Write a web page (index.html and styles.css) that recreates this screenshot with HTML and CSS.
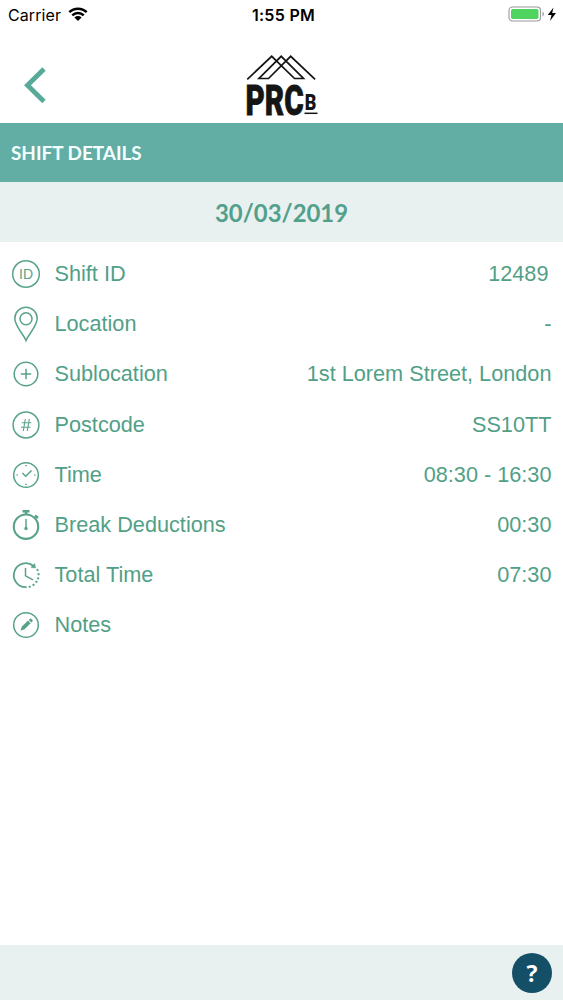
FILE: index.html
```html
<!DOCTYPE html>
<html lang="en">
<head>
    <meta charset="UTF-8">
    <title>Shift Details</title>
    <link rel="stylesheet" href="styles.css">
</head>
<body>
<div class="status">
    <div class="carrier">
        <span>Carrier</span>
        <svg width="20" height="15" viewBox="0 0 20 15">
            <path d="M1.3 5.2a12.4 12.4 0 0 1 17.4 0M4.3 8.3a8.2 8.2 0 0 1 11.4 0" fill="none" stroke="#000" stroke-width="2.5"/>
            <path d="M6.4 10.4a5.2 5.2 0 0 1 7.2 0L10 14z"/>
        </svg>
    </div>
    <div class="clock">1:55 PM</div>
    <div class="power">
        <svg width="48" height="18" viewBox="0 0 48 18">
            <rect x="0" y="2" width="31.500" height="14" rx="3.5" fill="#fff" stroke="#999" stroke-width="1.1"/>
            <rect x="2" y="4" width="27.500" height="10" rx="1.8" fill="#50d460"/>
            <path d="M33.500 6.500v5q3-2.500 0-5z" fill="#999"/>
            <path d="M44.500 2.500L38.800 10h3.700L41 16l6-8h-3.800z"/>
        </svg>
    </div>
</div>
<div class="header">
    <svg class="back" width="24" height="38" viewBox="0 0 24 38"><path d="M22 3L5.500 19.200L22 35.500" fill="none" stroke="#58aa98" stroke-width="4.800"/></svg>
    <svg class="logo" width="76" height="66" viewBox="0 0 76 66">
        <g fill="none" stroke="#151515" stroke-width="1.700">
            <path d="M3.300 25.300L27.700 2.300L50.500 24.500H59.500L37.200 2.300L15 24.500H24.500L46.700 2.300L71.100 25.300"/>
        </g>
        <text class="prc" transform="translate(1.500 60.500) scale(.69 1)">PRC</text>
        <text class="small-b" transform="translate(60.800 55.500) scale(.82 1)">B</text>
        <path d="M60.500 59.300h13" stroke="#151515" stroke-width="1.500"/>
    </svg>
</div>
<div class="title">SHIFT DETAILS</div>
<div class="date">30/03/2019</div>
<ul class="list">
    <li>
        <svg class="icon" viewBox="0 0 32 36"><circle cx="16" cy="18" r="13.300"/><text x="16" y="23" font-size="14" text-anchor="middle">ID</text></svg>
        <span class="label">Shift ID</span><span class="value id">12489</span>
    </li>
    <li>
        <svg class="icon" viewBox="0 0 32 36"><path d="M16 34.500C14 29 4.800 20 4.800 12.500a11.200 11.200 0 0 1 22.400 0C27.200 20 18 29 16 34.500z"/><circle cx="16" cy="12.700" r="6"/></svg>
        <span class="label">Location</span><span class="value">-</span>
    </li>
    <li>
        <svg class="icon" viewBox="0 0 32 36"><circle cx="16" cy="18" r="11.800"/><path d="M10.800 18h10.400M16 12.800v10.400"/></svg>
        <span class="label">Sublocation</span><span class="value">1st Lorem Street, London</span>
    </li>
    <li>
        <svg class="icon" viewBox="0 0 32 36"><circle cx="16" cy="18" r="12.900"/><path d="M15.300 12l-2 12M19.300 12l-2 12M11.800 15.700h9.500M11 20.300h9.500" stroke-width="1.100"/></svg>
        <span class="label">Postcode</span><span class="value">SS10TT</span>
    </li>
    <li>
        <svg class="icon" viewBox="0 0 32 36"><circle cx="16" cy="18" r="12.300"/><path d="M12.500 16l3.200 3.200 5.800-5.700M16 8v1.200M16 26.800V28M6.500 18h1.200M24.300 18h1.200"/></svg>
        <span class="label">Time</span><span class="value">08:30 - 16:30</span>
    </li>
    <li>
        <svg class="icon" viewBox="0 0 32 36"><circle cx="16" cy="19.700" r="12.200" stroke-width="2.100"/><path d="M12.500 4.300h7M16 4.500v3M25 8.500l3 2.500" stroke-width="2.400"/><path d="M16 12v9"/><circle class="solid" cx="16" cy="21.500" r="1"/></svg>
        <span class="label">Break Deductions</span><span class="value">00:30</span>
    </li>
    <li>
        <svg class="icon" viewBox="0 0 32 36"><path d="M16 30.200A12 12 0 1 1 23.500 9" stroke-width="1.800"/><path d="M26 10.500A12.200 12.200 0 0 1 16 30.200" stroke-width="2" stroke-dasharray="2 2.100" stroke-dashoffset="-2"/><path class="solid" d="M24.700 6.500l.8 4.500-4.500-.5z" stroke-width=".5"/><path d="M15.500 11v7.800l7.500 4"/></svg>
        <span class="label">Total Time</span><span class="value">07:30</span>
    </li>
    <li>
        <svg class="icon" viewBox="0 0 32 36"><circle cx="16" cy="18" r="12.300"/><path class="solid" d="M10.500 23.500l1.200-3.700 6.300-6.200 2.600 2.600-6.300 6.200zM18.700 12.900l1.300-1.200q.7-.5 1.300.1l1.200 1.200q.5.700 0 1.200l-1.300 1.300z" stroke="none"/></svg>
        <span class="label">Notes</span><span class="value"></span>
    </li>
</ul>
<div class="footer">
    <div class="help">?</div>
</div>
</body>
</html>
```
FILE: styles.css
```css
* {box-sizing: border-box;}
body {margin: 0;height: 1000px;display: flex;flex-direction: column;background: #fff;
    font-family: "Liberation Sans", Arial, sans-serif;overflow: hidden;}
svg {display: block;overflow: visible;}

.status {height: 30px;display: grid;grid-template-columns: 1fr auto 1fr;align-items: center;
    padding: 0 6px 0 8px;font-family: Inter, sans-serif;font-size: 16px;color: #000;}
.carrier {display: flex;align-items: center;gap: 7px;}
.carrier span {letter-spacing: .1px;}
.carrier svg {margin-top: -2px;}
.clock {font-weight: 600;font-size: 16px;letter-spacing: .3px;padding-left: 2px;}
.power {display: flex;justify-content: flex-end;margin-top: -2px;}

.header {height: 93px;display: grid;grid-template-columns: 1fr 76px 1fr;padding: 24px 0 0 0;}
.back {margin: 12px 0 0 22px;}
.prc {font: 900 43px Roboto, sans-serif;fill: #151515;stroke: #151515;stroke-width: .8;}
.small-b {font: 900 22px Roboto, sans-serif;fill: #151515;}

.title {height: 59px;line-height: 60px;padding-left: 11px;background: #62ada4;color: #f4ffff;
    font-family: Lato, sans-serif;font-size: 18.900px;font-weight: 700;}
.date {height: 60px;line-height: 61px;text-align: center;background: #e8f0f0;color: #52a08b;
    font-family: Lato, sans-serif;font-size: 23.900px;font-weight: 700;}

.list {list-style: none;margin: 0;padding: 7px 11.500px 0 9.500px;flex: 1;color: #529f87;font-size: 21.700px;}
.list li {display: flex;align-items: center;height: 50.200px;}
.icon {width: 32px;height: 36px;fill: none;stroke: #58a28c;stroke-width: 1.500;}
.icon text {fill: #58a28c;stroke: none;}
.icon .solid {fill: #58a28c;}
.label {margin-left: 13px;}
.value {margin-left: auto;}
.id {margin-right: 3px;}

.footer {height: 55px;display: flex;justify-content: flex-end;align-items: center;padding-right: 11px;background: #e8f0f0;}
.help {width: 40px;height: 40px;line-height: 40px;border-radius: 50%;background: #144f68;color: #fff;
    text-align: center;font-family: "Open Sans", sans-serif;font-size: 23px;font-weight: 700;}
```
